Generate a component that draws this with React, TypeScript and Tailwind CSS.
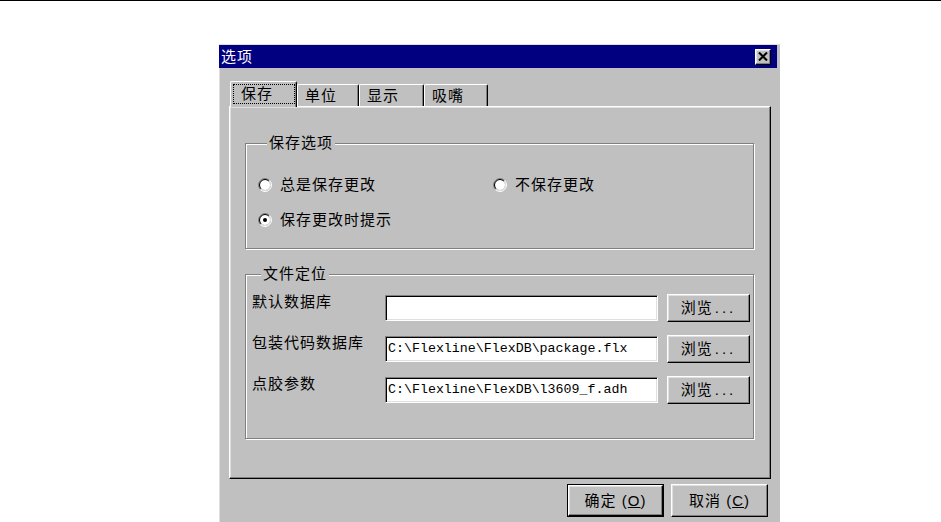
const ui = "font-['Liberation_Sans','Noto_Sans_CJK_SC',sans-serif] text-[15px] tracking-[1px] leading-[16px] text-black"

const raised =
  'border border-t-white border-l-white border-r-black border-b-black shadow-[inset_-1px_-1px_0_#808080,inset_1px_1px_0_#dfdfdf] bg-[#c0c0c0]'

const sunken =
  'border border-t-[#808080] border-l-[#808080] border-r-white border-b-white shadow-[inset_1px_1px_0_#000,inset_-1px_-1px_0_#dfdfdf] bg-white'

const tabs = [
  { label: '单位', w: 'w-[62px]' },
  { label: '显示', w: 'w-[65px]' },
  { label: '吸嘴', w: 'w-[64px]' },
]

const paths = [
  { label: '默认数据库', value: '' },
  { label: '包装代码数据库', value: 'C:\\Flexline\\FlexDB\\package.flx' },
  { label: '点胶参数', value: 'C:\\Flexline\\FlexDB\\l3609_f.adh' },
]

function Radio({ checked, label }: { checked?: boolean; label: string }) {
  return (
    <div className="flex items-center gap-[8px] h-[20px]">
      <svg width="14" height="14" viewBox="0 0 14 14" className="shrink-0">
        <circle cx="7" cy="7" r="5" fill="#fff" />
        <path d="M2.40 11.60 A6.5 6.5 0 0 1 11.60 2.40" stroke="#808080" fill="none" />
        <path d="M11.60 2.40 A6.5 6.5 0 0 1 2.40 11.60" stroke="#fff" fill="none" />
        <path d="M3.11 10.89 A5.5 5.5 0 0 1 10.89 3.11" stroke="#000" fill="none" />
        <path d="M10.89 3.11 A5.5 5.5 0 0 1 3.11 10.89" stroke="#dfdfdf" fill="none" />
        {checked && <circle cx="7" cy="7" r="2" fill="#000" />}
      </svg>
      <span>{label}</span>
    </div>
  )
}

function Browse() {
  return (
    <button className={`ml-[9px] w-[83px] h-[28px] flex items-center justify-center ${raised}`}>
      浏览<span className="tracking-[3px] pl-[2px]">...</span>
    </button>
  )
}

export default function App() {
  return (
    <div className={`w-[941px] h-[522px] bg-white overflow-hidden ${ui}`}>
      <div className="h-px bg-black" />

      {/* dialog */}
      <div className="ml-[219px] mt-[43px] w-[561px] h-[478px] bg-[#c0c0c0] pt-px shadow-[inset_1px_1px_0_#dfdfdf]">
        {/* title bar */}
        <div className="w-[558px] h-[23px] bg-[#000080] flex items-center justify-between pl-[2px] pr-[6px]">
          <span className="text-white">选项</span>
          <button className={`w-[16px] h-[16px] flex items-center justify-center ${raised}`}>
            <svg width="10" height="9" viewBox="0 0 10 9">
              <path d="M1 0.5 L9 8.5 M9 0.5 L1 8.5" stroke="black" strokeWidth="2" />
            </svg>
          </button>
        </div>

        <div className="pt-[13px] pl-[10px] pr-[9px]">
          {/* tabs */}
          <div className="flex items-start h-[25px] pl-px">
            <div className="relative z-10 w-[67px] h-[26px] bg-[#c0c0c0] border-t border-l border-white rounded-tl-[2px] shadow-[inset_-1px_0_0_#808080] border-r border-r-black rounded-tr-[2px] pl-[2px] pt-[2px]">
              <div className="w-[62px] h-[20px] border border-dotted border-black flex items-center pl-[7px]">
                保存
              </div>
            </div>
            {tabs.map(t => (
              <div
                key={t.label}
                className={`${t.w} h-[22px] mt-[3px] border-t border-l border-white border-r border-r-black rounded-t-[2px] shadow-[inset_-1px_0_0_#808080] flex items-center pl-[7px]`}
              >
                {t.label}
              </div>
            ))}
          </div>

          {/* panel */}
          <div className="w-[542px] h-[373px] border border-t-white border-l-white border-r-black border-b-black shadow-[inset_-1px_-1px_0_#808080,inset_1px_1px_0_#dfdfdf] pl-[15px] pt-[28px]">
            <fieldset className="w-[509px] border border-[#808080] shadow-[inset_1px_1px_0_#fff,1px_1px_0_#fff] pl-[12px] pt-[24px] pb-[18px]">
              <legend className="ml-[9px] px-[2px] bg-[#c0c0c0]">保存选项</legend>
              <div className="grid grid-cols-[235px_1fr] gap-y-[15px]">
                <Radio label="总是保存更改" />
                <Radio label="不保存更改" />
                <Radio checked label="保存更改时提示" />
              </div>
            </fieldset>

            <fieldset className="mt-[17px] w-[509px] border border-[#808080] shadow-[inset_1px_1px_0_#fff,1px_1px_0_#fff] pl-[6px] pt-[12px] pb-[34px]">
              <legend className="ml-[9px] px-[2px] bg-[#c0c0c0]">文件定位</legend>
              <div className="flex flex-col gap-[13px]">
                {paths.map(p => (
                  <div key={p.label} className="flex items-center h-[28px]">
                    <span className="w-[133px] self-start">{p.label}</span>
                    <div className={`w-[273px] h-[26px] flex items-center pl-[2px] font-['Liberation_Mono',monospace] text-[13.3px] tracking-normal ${sunken}`}>
                      {p.value}
                    </div>
                    <Browse />
                  </div>
                ))}
              </div>
            </fieldset>
          </div>

          {/* buttons */}
          <div className="flex justify-end gap-[7px] mt-[5px] pr-[3px]">
            <div className="w-[97px] h-[33px] border border-black flex">
              <button className={`flex-1 flex items-center justify-center ${raised}`}>
                确定 (<span className="underline">O</span>)
              </button>
            </div>
            <button className={`w-[97px] h-[33px] flex items-center justify-center ${raised}`}>
              取消 (<span className="underline">C</span>)
            </button>
          </div>
        </div>
      </div>
    </div>
  )
}
